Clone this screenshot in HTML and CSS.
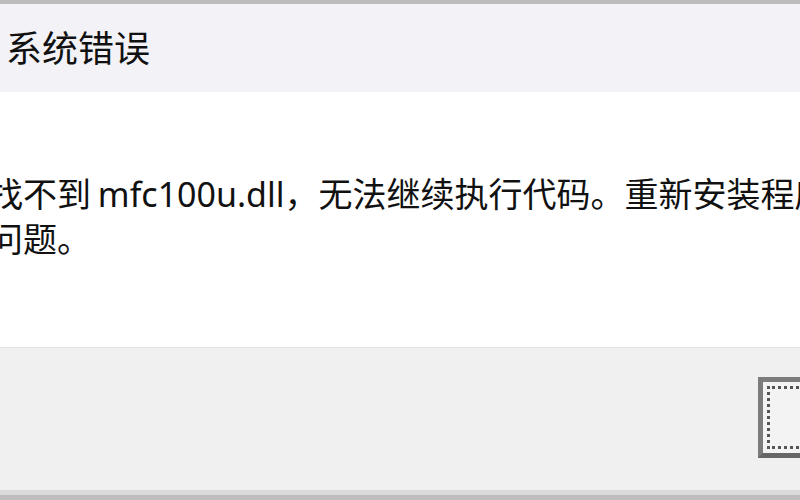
FILE: index.html
```html
<!DOCTYPE html>
<html lang="zh-CN">
<head>
    <meta charset="UTF-8">
    <meta name="viewport" content="width=device-width, initial-scale=1.0">
    <title>系统错误</title>
    <link rel="stylesheet" href="styles.css">
</head>
<body>

    <div class="dialog">
        <div class="title-bar">
            <span class="title">系统错误</span>
        </div>

        <div class="content">
            <p class="message">
                找不到 mfc100u.dll，无法继续执行代码。重新安装程序可能会解决此<br>问题。
            </p>
        </div>

        <div class="footer">
            <button class="btn-ok">确定</button>
        </div>
    </div>

</body>
</html>
```

FILE: styles.css
```css
*{
    margin: 0;
    padding: 0;
    box-sizing: border-box;
}

html, body {
    width: 800px;
    height: 500px;
    overflow: hidden;
    background-color: white;
}

body {
    font-family: "Noto Sans", "Noto Sans CJK SC", sans-serif;
    color: #111;
}

.dialog{
    width: 1000px;
    border-top: 4px solid #bcbcbc;
    border-bottom: 5px solid #bdbdbd;
}

.title-bar{
    height: 88px;
    background-color: #f2f2f7;
    display: flex;
    align-items: center;
    padding-left: 6px;
    padding-bottom: 4px;
}

.title{
    font-size: 36px;
}

.content{
    height: 255px;
    background-color: white;
    padding-top: 80px;
}

.message{
    margin-left: -11px;
    font-size: 34px;
    line-height: 45px;
    white-space: nowrap;
    word-spacing: -2px;
}

.footer{
    height: 148px;
    background-color: #f0f0f0;
    border-top: 1px solid #e4e4e4;
    border-bottom: 5px solid #dadada;
    display: flex;
    align-items: center;
    justify-content: flex-end;
    padding-right: 24px;
    padding-bottom: 4px;
}

.btn-ok{
    position: relative;
    width: 218px;
    height: 81px;
    border: 5px solid #7c7c7c;
    border-bottom-color: #666;
    background-color: #f3f3f3;
    font-family: inherit;
    font-size: 34px;
    color: #111;
}

.btn-ok::after{
    content: "";
    position: absolute;
    top: 4px;
    left: 4px;
    right: 4px;
    bottom: 4px;
    border: 3px dotted #555;
}
```
